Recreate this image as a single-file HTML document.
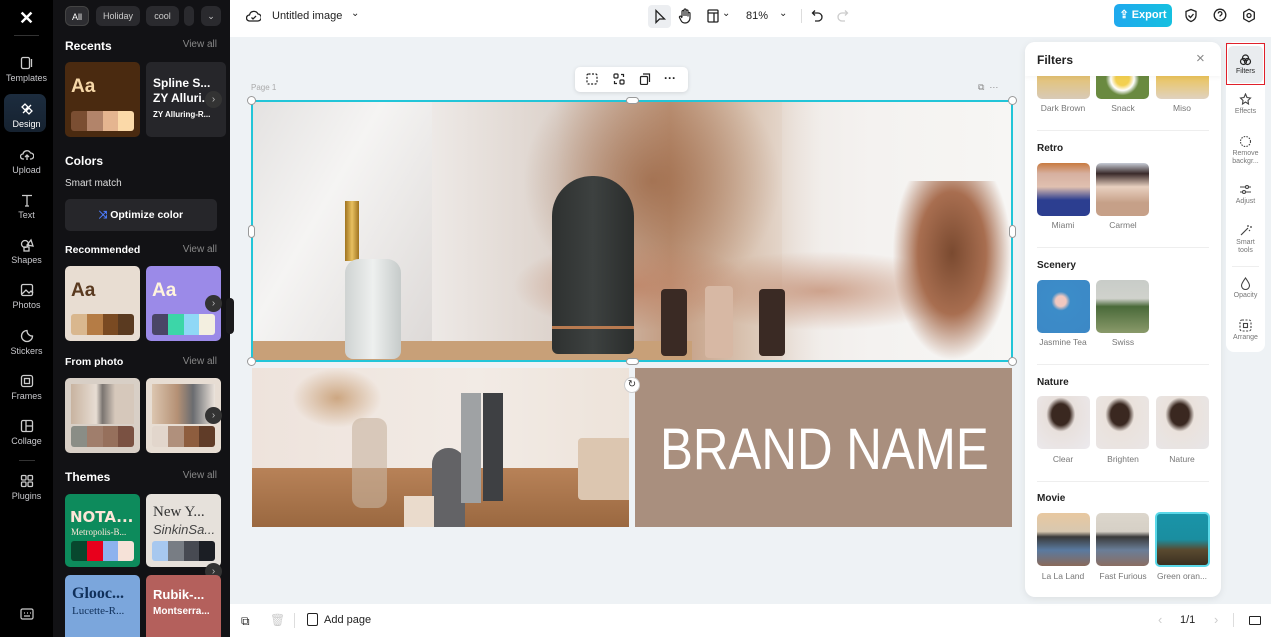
<!DOCTYPE html>
<html><head><meta charset="utf-8">
<style>
*{box-sizing:border-box;margin:0;padding:0}
body{width:1271px;height:637px;overflow:hidden;font-family:"Liberation Sans",sans-serif;background:#eef2f5;position:relative}
.abs{position:absolute}
.rail{left:0;top:0;width:53px;height:637px;background:#000}
.ri{position:absolute;left:0;width:53px;text-align:center;color:#c8c8cc;font-size:9px}
.ri svg{display:block;margin:0 auto 3px}
.panel{left:53px;top:0;width:177px;height:637px;background:#121215;color:#fff;overflow:hidden}
.chip{position:absolute;top:6px;height:20px;border-radius:6px;background:#2a2a2e;color:#ccc;font-size:9px;line-height:20px;text-align:center}
.h{position:absolute;left:12px;font-size:12px;font-weight:bold;color:#fff}
.va{position:absolute;right:13px;font-size:10px;color:#888}
.card{position:absolute;width:75px;height:75px;border-radius:5px;overflow:hidden}
.sw{position:absolute;left:6px;right:6px;bottom:6px;height:21px;border-radius:3px;overflow:hidden;display:flex}
.sw i{flex:1}
.arr{position:absolute;width:17px;height:17px;border-radius:50%;background:#333;color:#bbb;font-size:10px;line-height:17px;text-align:center}
.top{left:230px;top:0;width:1041px;height:37px;background:#fff}
.bot{left:230px;top:604px;width:1041px;height:33px;background:#fff}
.fp{left:1025px;top:42px;width:196px;height:555px;background:#fff;border-radius:10px;box-shadow:0 2px 8px rgba(0,0,0,.08);overflow:hidden}
.fh{position:absolute;left:12px;font-size:10px;font-weight:bold;color:#222}
.th{position:absolute;width:53px;height:53px;border-radius:5px;overflow:hidden}
.tl{position:absolute;width:60px;text-align:center;font-size:8.5px;color:#777}
.dv{position:absolute;left:12px;width:172px;height:1px;background:#eee}
.rr{left:1226px;top:42px;width:39px;height:310px;background:#fff;border-radius:8px}
.rb{position:absolute;left:0;width:39px;text-align:center;font-size:7px;color:#777;line-height:8px}
.rb svg{display:block;margin:0 auto 2px}
.hd{position:absolute;width:9px;height:9px;border-radius:50%;background:#fff;border:1px solid #999}
</style></head><body>

<!-- left rail -->
<div class="abs rail">
 <div class="ri" style="top:8px;color:#fff;font-size:18px;font-weight:bold">✕</div>
 <div style="position:absolute;left:14px;top:35px;width:25px;height:1px;background:#333"></div>
 <div class="ri" style="top:56px"><svg width="14" height="14" viewBox="0 0 14 14" fill="none" stroke="#ccc" stroke-width="1.3"><rect x="1.5" y="1.5" width="8" height="11" rx="1.5"/><path d="M11.5 3v8"/></svg>Templates</div>
 <div style="position:absolute;left:4px;top:94px;width:42px;height:38px;border-radius:7px;background:linear-gradient(#1c2c3e,#162230)"></div>
 <div class="ri" style="top:102px;color:#fff"><svg width="14" height="14" viewBox="0 0 14 14" fill="none" stroke="#fff" stroke-width="1.3"><path d="M2 5l3-3 3 3-3 3zM6 9l3-3 3 3-3 3zM3 11l8-8"/></svg>Design</div>
 <div class="ri" style="top:148px"><svg width="14" height="14" viewBox="0 0 14 14" fill="none" stroke="#ccc" stroke-width="1.3"><path d="M4 11H3a2.5 2.5 0 010-5 4 4 0 017.5-1A3 3 0 0111 11h-1M7 12V7M5 9l2-2 2 2"/></svg>Upload</div>
 <div class="ri" style="top:193px"><svg width="14" height="14" viewBox="0 0 14 14" fill="none" stroke="#ccc" stroke-width="1.3"><path d="M2 2.5h10M7 2.5V13M5 13h4"/></svg>Text</div>
 <div class="ri" style="top:238px"><svg width="14" height="14" viewBox="0 0 14 14" fill="none" stroke="#ccc" stroke-width="1.3"><circle cx="5" cy="6" r="3.5"/><path d="M7 7l4-5 2 6z"/><rect x="4" y="9" width="5" height="4"/></svg>Shapes</div>
 <div class="ri" style="top:283px"><svg width="14" height="14" viewBox="0 0 14 14" fill="none" stroke="#ccc" stroke-width="1.3"><rect x="1.5" y="1.5" width="11" height="11" rx="1.5"/><path d="M2 11l4-4 3 3 2-2 2 2"/></svg>Photos</div>
 <div class="ri" style="top:329px"><svg width="14" height="14" viewBox="0 0 14 14" fill="none" stroke="#ccc" stroke-width="1.3"><path d="M12.5 7A5.5 5.5 0 117 1.5c0 3 2 5.5 5.5 5.5z"/></svg>Stickers</div>
 <div class="ri" style="top:374px"><svg width="14" height="14" viewBox="0 0 14 14" fill="none" stroke="#ccc" stroke-width="1.3"><rect x="1.5" y="1.5" width="11" height="11" rx="2"/><rect x="4.5" y="4.5" width="5" height="5"/></svg>Frames</div>
 <div class="ri" style="top:419px"><svg width="14" height="14" viewBox="0 0 14 14" fill="none" stroke="#ccc" stroke-width="1.3"><rect x="1.5" y="1.5" width="11" height="11" rx="1.5"/><path d="M6 1.5v11M6 7h6.5"/></svg>Collage</div>
 <div style="position:absolute;left:19px;top:460px;width:16px;height:1px;background:#333"></div>
 <div class="ri" style="top:474px"><svg width="14" height="14" viewBox="0 0 14 14" fill="none" stroke="#ccc" stroke-width="1.3"><rect x="1.5" y="1.5" width="4.5" height="4.5" rx="1"/><rect x="8" y="1.5" width="4.5" height="4.5" rx="1"/><rect x="1.5" y="8" width="4.5" height="4.5" rx="1"/><rect x="8" y="8" width="4.5" height="4.5" rx="1"/></svg>Plugins</div>
 <div class="ri" style="top:608px"><svg width="14" height="12" viewBox="0 0 14 12" fill="none" stroke="#ccc" stroke-width="1.2"><rect x="1" y="1" width="12" height="10" rx="1.5"/><path d="M4 8h6M4 5h1M7 5h1M10 5h1"/></svg></div>
</div>

<!-- design panel -->
<div class="abs panel">
 <div class="chip" style="left:12px;width:24px;background:#2d2d31;border:1px solid #444;color:#fff">All</div>
 <div class="chip" style="left:43px;width:44px">Holiday</div>
 <div class="chip" style="left:93px;width:33px">cool</div>
 <div class="chip" style="left:131px;width:10px"></div>
 <div class="chip" style="left:148px;width:20px">⌄</div>
 <div class="h" style="top:39px">Recents</div><div class="va" style="top:39px">View all</div>
 <div class="card" style="left:12px;top:62px;background:#4a2a10"><div style="position:absolute;left:6px;top:14px;font-size:19px;font-weight:bold;color:#f6d7a8">Aa</div><div class="sw" style="height:20px"><i style="background:#7a4e32"></i><i style="background:#b2846a"></i><i style="background:#e5b590"></i><i style="background:#fbd9a8"></i></div></div>
 <div class="card" style="left:93px;top:62px;width:80px;background:#26262a"><div style="position:absolute;left:7px;top:14px;font-size:12px;font-weight:bold;line-height:15px;white-space:nowrap">Spline S...<br>ZY Alluri..</div><div style="position:absolute;left:7px;top:48px;font-size:8px;font-weight:bold;white-space:nowrap">ZY Alluring-R...</div></div>
 <div class="arr" style="left:152px;top:91px">›</div>
 <div class="h" style="top:154px">Colors</div>
 <div style="position:absolute;left:12px;top:178px;font-size:10px;color:#ddd">Smart match</div>
 <div style="position:absolute;left:12px;top:199px;width:152px;height:32px;border-radius:5px;background:#26262a;font-size:10.5px;font-weight:bold;line-height:32px;text-align:center"><span style="color:#4d7cff">⤨</span> Optimize color</div>
 <div class="h" style="top:244px;font-size:10.5px">Recommended</div><div class="va" style="top:244px">View all</div>
 <div class="card" style="left:12px;top:266px;background:#e8ddd2"><div style="position:absolute;left:6px;top:14px;font-size:19px;font-weight:bold;color:#5a3a20">Aa</div><div class="sw"><i style="background:#d9b78e"></i><i style="background:#b57c45"></i><i style="background:#7a4a22"></i><i style="background:#5a3a20"></i></div></div>
 <div class="card" style="left:93px;top:266px;background:#9b8ae8"><div style="position:absolute;left:6px;top:14px;font-size:19px;font-weight:bold;color:#fff4dd">Aa</div><div class="sw"><i style="background:#4a4566"></i><i style="background:#3cd6a8"></i><i style="background:#8fd8f6"></i><i style="background:#f3efe0"></i></div></div>
 <div class="arr" style="left:152px;top:295px">›</div>
 <div class="h" style="top:356px;font-size:10.5px">From photo</div><div class="va" style="top:356px">View all</div>
 <div class="card" style="left:12px;top:378px;background:#d8cfc6"><div style="position:absolute;left:6px;top:6px;right:6px;height:40px;background:linear-gradient(90deg,#c8b3a0,#e7ddd3 40%,#7a7470 50%,#d6c8bb 70%)"></div><div class="sw"><i style="background:#8a8d86"></i><i style="background:#a07e6c"></i><i style="background:#96705c"></i><i style="background:#7a5142"></i></div></div>
 <div class="card" style="left:93px;top:378px;background:#e7ddd3"><div style="position:absolute;left:6px;top:6px;right:6px;height:40px;background:linear-gradient(90deg,#dcc6b0,#b59175 40%,#6a6c70 65%,#ece4dc)"></div><div class="sw"><i style="background:#e2d6cc"></i><i style="background:#b0907c"></i><i style="background:#8e5d3e"></i><i style="background:#603c28"></i></div></div>
 <div class="arr" style="left:152px;top:407px">›</div>
 <div class="h" style="top:470px">Themes</div><div class="va" style="top:470px">View all</div>
 <div class="card" style="left:12px;top:494px;height:73px;background:#0d8b5c"><div style="position:absolute;left:5px;top:14px;font-size:15px;font-weight:900;color:#fde6d8;font-family:'DejaVu Sans';white-space:nowrap">NOTA...</div><div style="position:absolute;left:6px;top:33px;font-size:9px;color:#fde6d8;font-family:'Liberation Serif';white-space:nowrap">Metropolis-B...</div><div class="sw" style="height:20px"><i style="background:#08472e"></i><i style="background:#e8001c"></i><i style="background:#8db2ee"></i><i style="background:#f6e2d8"></i></div></div>
 <div class="card" style="left:93px;top:494px;height:73px;background:#e6e1db"><div style="position:absolute;left:7px;top:10px;font-size:15px;color:#333;font-family:'Liberation Serif';white-space:nowrap">New Y...</div><div style="position:absolute;left:7px;top:28px;font-size:13px;font-style:italic;color:#444;white-space:nowrap">SinkinSa...</div><div class="sw" style="height:20px"><i style="background:#a7c8ef"></i><i style="background:#787d84"></i><i style="background:#474a52"></i><i style="background:#1b1e24"></i></div></div>
 <div class="arr" style="left:152px;top:563px">›</div>
 <div class="card" style="left:12px;top:575px;background:#7ba6dc"><div style="position:absolute;left:7px;top:10px;font-size:16px;font-weight:bold;color:#10305a;font-family:'Liberation Serif';white-space:nowrap">Glooc...</div><div style="position:absolute;left:7px;top:30px;font-size:11px;color:#10305a;font-family:'Liberation Serif';white-space:nowrap">Lucette-R...</div><div class="sw" style="bottom:-10px"><i style="background:#c8d6a8"></i><i style="background:#3d7ccf"></i><i style="background:#4a5a2a"></i><i style="background:#0c2a48"></i></div></div>
 <div class="card" style="left:93px;top:575px;background:#b4605c"><div style="position:absolute;left:7px;top:12px;font-size:13px;font-weight:bold;color:#fff;white-space:nowrap">Rubik-...</div><div style="position:absolute;left:7px;top:31px;font-size:10px;font-weight:bold;color:#fff;white-space:nowrap">Montserra...</div><div class="sw" style="bottom:-10px"><i style="background:#a83030"></i><i style="background:#d8b0ac"></i><i style="background:#e6d8d6"></i><i style="background:#fff"></i></div></div>
</div>
<div class="abs" style="left:226px;top:298px;width:8px;height:36px;background:#1a1a1c;border-radius:4px"></div>

<!-- top bar -->
<div class="abs top">
 <svg class="abs" style="left:16px;top:9px" width="15" height="14" viewBox="0 0 15 14" fill="none" stroke="#222" stroke-width="1.3"><path d="M4 12H3.5a3 3 0 010-6 4.5 4.5 0 018.5-1 3.5 3.5 0 01-.5 7z"/><path d="M5.5 8.5l1.5 1.5 3-3"/></svg>
 <div class="abs" style="left:42px;top:10px;font-size:11px;color:#222">Untitled image</div>
 <div class="abs" style="left:121px;top:8px;font-size:10px;color:#222">⌄</div>
 <div class="abs" style="left:418px;top:5px;width:23px;height:23px;border-radius:4px;background:#eceef1"></div>
 <svg class="abs" style="left:423px;top:9px" width="14" height="15" viewBox="0 0 14 15" fill="none" stroke="#222" stroke-width="1.3"><path d="M3 1.5v12l3.5-3.5h5z"/></svg>
 <svg class="abs" style="left:448px;top:8px" width="14" height="16" viewBox="0 0 14 16" fill="none" stroke="#222" stroke-width="1.2"><path d="M4 9V3.5a1 1 0 012 0V8M6 7V2a1 1 0 012 0v6M8 7.5V3a1 1 0 012 0v5.5M10 8V5.5a1 1 0 012 0V10a5 5 0 01-5 5 4.5 4.5 0 01-4-2.5L1.5 9.5a1 1 0 011.7-1L4 10"/></svg>
 <svg class="abs" style="left:477px;top:9px" width="12" height="14" viewBox="0 0 12 14" fill="none" stroke="#222" stroke-width="1.3"><rect x="1" y="1" width="10" height="12" rx="1"/><path d="M1 4h10M7 4v9"/></svg>
 <div class="abs" style="left:492px;top:8px;font-size:10px;color:#222">⌄</div>
 <div class="abs" style="left:516px;top:10px;font-size:11px;color:#222">81%</div>
 <div class="abs" style="left:549px;top:8px;font-size:10px;color:#222">⌄</div>
 <div class="abs" style="left:571px;top:9px;width:1px;height:14px;background:#ddd"></div>
 <svg class="abs" style="left:581px;top:9px" width="12" height="13" viewBox="0 0 12 13" fill="none" stroke="#222" stroke-width="1.3"><path d="M4 1.5L1.5 4 4 6.5M1.5 4H7a4 4 0 010 8H4"/></svg>
 <svg class="abs" style="left:607px;top:9px" width="12" height="13" viewBox="0 0 12 13" fill="none" stroke="#ccc" stroke-width="1.3"><path d="M8 1.5L10.5 4 8 6.5M10.5 4H5a4 4 0 000 8h3"/></svg>
 <div class="abs" style="left:884px;top:4px;width:58px;height:23px;border-radius:5px;background:linear-gradient(90deg,#1fa9ee,#15c0e0);color:#fff;font-size:11px;font-weight:bold;line-height:23px;text-align:center">⇪ Export</div>
 <svg class="abs" style="left:954px;top:8px" width="14" height="15" viewBox="0 0 14 15" fill="none" stroke="#222" stroke-width="1.3"><path d="M7 1.5l5 2v4c0 3-2.5 5-5 6-2.5-1-5-3-5-6v-4z"/><path d="M4.5 7.5l2 2 3-3.5"/></svg>
 <svg class="abs" style="left:983px;top:8px" width="14" height="14" viewBox="0 0 14 14" fill="none" stroke="#222" stroke-width="1.3"><circle cx="7" cy="7" r="5.8"/><path d="M5.3 5.5a1.8 1.8 0 113 1.3c-.8.5-1.3.8-1.3 1.7M7 10.3v.2"/></svg>
 <svg class="abs" style="left:1012px;top:8px" width="14" height="15" viewBox="0 0 14 15" fill="none" stroke="#222" stroke-width="1.3"><path d="M7 1.2l5.3 3v6.6L7 13.8 1.7 10.8V4.2z"/><circle cx="7" cy="7.5" r="2"/></svg>
</div>

<!-- canvas -->
<div class="abs" style="left:251px;top:83px;font-size:8px;color:#aaa">Page 1</div>
<div class="abs" style="left:978px;top:82px;font-size:9px;color:#888">⧉ &nbsp;···</div>
<div class="abs" style="left:575px;top:67px;width:113px;height:25px;background:#fff;border-radius:5px;box-shadow:0 1px 4px rgba(0,0,0,.12)">
 <svg class="abs" style="left:11px;top:6px" width="12" height="12" viewBox="0 0 12 12" fill="none" stroke="#222" stroke-width="1.2" stroke-dasharray="2 1.5"><rect x="1" y="1" width="10" height="10" rx="1.5"/></svg>
 <svg class="abs" style="left:38px;top:6px" width="12" height="12" viewBox="0 0 12 12" fill="none" stroke="#222" stroke-width="1.2"><rect x="1" y="1" width="4" height="4" rx="1"/><rect x="7" y="7" width="4" height="4" rx="1"/><path d="M8 1.5h2.5V4M4 10.5H1.5V8"/></svg>
 <svg class="abs" style="left:64px;top:6px" width="12" height="12" viewBox="0 0 12 12" fill="none" stroke="#222" stroke-width="1.2"><rect x="1.5" y="3.5" width="7" height="8" rx="1"/><path d="M4 1h6.5v8"/></svg>
 <div class="abs" style="left:89px;top:4px;font-size:12px;font-weight:bold;color:#222">···</div>
</div>

<!-- top photo -->
<div class="abs" style="left:252px;top:101px;width:760px;height:260px;overflow:hidden;background:linear-gradient(90deg,#e9e5e2 0%,#f1eeec 20%,#ddd3cc 40%,#c29b80 55%,#d9c3b1 65%,#efe9e5 75%,#f6f3f1 100%)">
 <div class="abs" style="left:0;top:0;width:180px;height:260px;background:linear-gradient(120deg,#e4e2e1,#f5f4f3 40%,#dcd8d6)"></div>
 <div class="abs" style="left:270px;top:0;width:260px;height:200px;background:radial-gradient(ellipse at 50% 40%,rgba(150,95,60,.7),rgba(200,160,130,0) 70%)"></div>
 <div class="abs" style="left:530px;top:0;width:230px;height:260px;background:linear-gradient(90deg,rgba(240,238,236,.2),#f4f2f0 40%,#f7f6f4)"></div>
 <div class="abs" style="left:260px;top:140px;width:240px;height:90px;background:radial-gradient(ellipse,rgba(190,130,100,.8),rgba(220,180,160,0) 70%)"></div>
 <div class="abs" style="left:420px;top:150px;width:300px;height:80px;background:radial-gradient(ellipse,rgba(190,130,100,.7),rgba(220,180,160,0) 70%)"></div>
 <div class="abs" style="left:640px;top:80px;width:120px;height:180px;background:radial-gradient(ellipse at 50% 40%,#7a4a30,#a86e50 40%,rgba(220,190,170,0) 70%)"></div>
 <div class="abs" style="left:0;top:240px;width:440px;height:20px;background:#c8a078"></div>
 <div class="abs" style="left:93px;top:100px;width:14px;height:60px;background:linear-gradient(90deg,#a07420,#e8c060,#a07420)"></div>
 <div class="abs" style="left:93px;top:158px;width:56px;height:100px;border-radius:14px 14px 8px 8px;background:linear-gradient(90deg,#cfd3d2,#eef0ef,#c6cbca)"></div>
 <div class="abs" style="left:300px;top:75px;width:82px;height:178px;border-radius:40px 40px 6px 6px;background:linear-gradient(90deg,#2e3130,#3d4140 50%,#2a2d2c)"></div>
 <div class="abs" style="left:300px;top:225px;width:82px;height:3px;background:#b87a50"></div>
 <div class="abs" style="left:409px;top:188px;width:26px;height:67px;border-radius:4px;background:#3a2a24"></div>
 <div class="abs" style="left:453px;top:185px;width:28px;height:72px;border-radius:4px;background:#d7b8a4"></div>
 <div class="abs" style="left:507px;top:188px;width:26px;height:67px;border-radius:4px;background:#3a2a24"></div>
</div>
<div class="abs" style="left:251px;top:100px;width:762px;height:262px;border:2px solid #22c5d8"></div>
<div class="hd" style="left:247px;top:96px"></div><div class="hd" style="left:1008px;top:96px"></div>
<div class="hd" style="left:247px;top:357px"></div><div class="hd" style="left:1008px;top:357px"></div>
<div class="abs" style="left:626px;top:97px;width:13px;height:7px;border-radius:4px;background:#fff;border:1px solid #999"></div>
<div class="abs" style="left:626px;top:358px;width:13px;height:7px;border-radius:4px;background:#fff;border:1px solid #999"></div>
<div class="abs" style="left:248px;top:225px;width:7px;height:13px;border-radius:4px;background:#fff;border:1px solid #999"></div>
<div class="abs" style="left:1009px;top:225px;width:7px;height:13px;border-radius:4px;background:#fff;border:1px solid #999"></div>

<!-- bottom left photo -->
<div class="abs" style="left:252px;top:368px;width:377px;height:159px;overflow:hidden;background:linear-gradient(90deg,#eee3dc,#f2ebe5 60%,#ede3da)">
 <div class="abs" style="left:0;top:100px;width:377px;height:59px;background:linear-gradient(#b88258,#9a6840)"></div>
 <div class="abs" style="left:40px;top:0;width:90px;height:60px;background:radial-gradient(ellipse,rgba(190,140,90,.7),rgba(230,200,170,0) 70%)"></div>
 <div class="abs" style="left:100px;top:50px;width:35px;height:90px;border-radius:10px;background:rgba(200,180,160,.6)"></div>
 <div class="abs" style="left:180px;top:80px;width:33px;height:112px;border-radius:16px 16px 3px 3px;background:#636366"></div>
 <div class="abs" style="left:209px;top:25px;width:20px;height:110px;background:#9fa2a4"></div>
 <div class="abs" style="left:231px;top:25px;width:20px;height:108px;background:#3e4043"></div>
 <div class="abs" style="left:326px;top:70px;width:55px;height:62px;border-radius:4px;background:#dcc6b0"></div>
 <div class="abs" style="left:152px;top:128px;width:30px;height:31px;background:#eadbcc"></div>
</div>
<!-- brand -->
<div class="abs" style="left:635px;top:368px;width:377px;height:159px;background:#a98f7e"></div>
<div class="abs" style="left:660px;top:421px;font-family:'Liberation Sans Narrow','Liberation Sans',sans-serif;font-size:58px;line-height:58px;color:#fff;white-space:nowrap;transform:scaleX(.85);transform-origin:left">BRAND NAME</div>
<div class="abs" style="left:624px;top:377px;width:16px;height:16px;border-radius:50%;background:#fff;border:1px solid #ccc;font-size:10px;text-align:center;line-height:14px;color:#333">↻</div>

<!-- bottom bar -->
<div class="abs bot">
 <div class="abs" style="left:11px;top:10px;font-size:12px;color:#222">⧉</div>
 <div class="abs" style="left:40px;top:9px;font-size:12px;color:#ccc">🗑︎</div>
 <div class="abs" style="left:64px;top:9px;width:1px;height:15px;background:#ddd"></div>
 <div class="abs" style="left:77px;top:9px;width:11px;height:13px;border:1.3px solid #222;border-radius:2px"></div>
 <div class="abs" style="left:94px;top:10px;font-size:11px;color:#222">Add page</div>
 <div class="abs" style="left:928px;top:8px;font-size:13px;color:#ccc">‹</div>
 <div class="abs" style="left:950px;top:10px;font-size:11px;color:#222">1/1</div>
 <div class="abs" style="left:984px;top:8px;font-size:13px;color:#ccc">›</div>
 <div class="abs" style="left:1003px;top:9px;width:1px;height:14px;background:#ddd"></div>
 <div class="abs" style="left:1019px;top:12px;width:12px;height:9px;border:1.4px solid #222;border-radius:1px"></div>
</div>

<!-- filters panel -->
<div class="abs fp">
 <div class="th" style="left:12px;top:28px;height:29px;background:linear-gradient(#e8c060,#d8cab8)"></div>
 <div class="th" style="left:71px;top:28px;height:29px;background:radial-gradient(circle at 50% 30%,#f3d050 20%,#fff 35%,#6a8a40 50%)"></div>
 <div class="th" style="left:131px;top:28px;height:29px;background:linear-gradient(#eec040,#e0d2c0)"></div>
 <div class="abs" style="left:0;top:0;width:196px;height:34px;background:#fff;box-shadow:0 2px 4px rgba(0,0,0,.04)"></div>
 <div class="abs" style="left:12px;top:11px;font-size:12px;font-weight:bold;color:#222">Filters</div>
 <div class="abs" style="left:171px;top:8px;font-size:15px;color:#888">×</div>
 <div class="tl" style="left:8px;top:61px">Dark Brown</div><div class="tl" style="left:68px;top:61px">Snack</div><div class="tl" style="left:127px;top:61px">Miso</div>
 <div class="dv" style="top:88px"></div>
 <div class="fh" style="top:101px">Retro</div>
 <div class="th" style="left:12px;top:121px;background:linear-gradient(#c87a40 0%,#d6b0a0 20%,#e0c0b0 45%,#2c3e90 70%)"></div>
 <div class="th" style="left:71px;top:121px;background:linear-gradient(#c7ccd6 0%,#3a2a2a 20%,#e8d0c0 45%,#c6a088 75%)"></div>
 <div class="tl" style="left:8px;top:178px">Miami</div><div class="tl" style="left:68px;top:178px">Carmel</div>
 <div class="dv" style="top:205px"></div>
 <div class="fh" style="top:218px">Scenery</div>
 <div class="th" style="left:12px;top:238px;background:radial-gradient(circle at 45% 40%,#f0c8c0 12%,#3c8cc8 22%,#3c88c6)"></div>
 <div class="th" style="left:71px;top:238px;background:linear-gradient(#c8ccc8 0%,#d0d2cc 35%,#4a6a3a 50%,#8a9a6a 100%)"></div>
 <div class="tl" style="left:8px;top:295px">Jasmine Tea</div><div class="tl" style="left:68px;top:295px">Swiss</div>
 <div class="dv" style="top:322px"></div>
 <div class="fh" style="top:335px">Nature</div>
 <div class="th" style="left:12px;top:354px;background:radial-gradient(ellipse at 45% 35%,#3a2820 22%,#e8e0dc 35%,#eceaee)"></div>
 <div class="th" style="left:71px;top:354px;background:radial-gradient(ellipse at 45% 35%,#3a2820 22%,#eae2dc 35%,#eae6e6)"></div>
 <div class="th" style="left:131px;top:354px;background:radial-gradient(ellipse at 45% 35%,#3a2820 22%,#eae2dc 35%,#e8e6e8)"></div>
 <div class="tl" style="left:8px;top:412px">Clear</div><div class="tl" style="left:68px;top:412px">Brighten</div><div class="tl" style="left:127px;top:412px">Nature</div>
 <div class="dv" style="top:439px"></div>
 <div class="fh" style="top:451px">Movie</div>
 <div class="th" style="left:12px;top:471px;background:linear-gradient(#e8c8a0 0%,#d8c8b0 35%,#3a3a3a 45%,#5a7aa0 70%,#8a6a5a 100%)"></div>
 <div class="th" style="left:71px;top:471px;background:linear-gradient(#dcd6cc 0%,#d6d0c6 35%,#3a3a3a 45%,#6a7e98 70%,#8a6e62 100%)"></div>
 <div class="th" style="left:130px;top:470px;width:55px;height:55px;border:2px solid #5ad8e8;background:linear-gradient(#1a94a8 0%,#1a8ea0 50%,#5a4a30 70%,#3a3020)"></div>
 <div class="tl" style="left:8px;top:529px">La La Land</div><div class="tl" style="left:68px;top:529px">Fast Furious</div><div class="tl" style="left:127px;top:529px">Green oran...</div>
</div>

<!-- right rail -->
<div class="abs rr">
 <div class="abs" style="left:2px;top:4px;width:35px;height:37px;border-radius:5px;background:#e9ecef"></div>
 <div class="rb" style="top:12px;color:#222"><svg width="13" height="12" viewBox="0 0 13 12" fill="none" stroke="#222" stroke-width="1.2"><circle cx="6.5" cy="4" r="3"/><circle cx="4.5" cy="7.5" r="3"/><circle cx="8.5" cy="7.5" r="3"/></svg>Filters</div>
 <div class="rb" style="top:51px"><svg width="13" height="13" viewBox="0 0 13 13" fill="none" stroke="#444" stroke-width="1.1"><path d="M6.5 1l1.5 3.5 3.5.5-2.5 2.5.5 3.5-3-2-3 2 .5-3.5L1.5 5 5 4.5z"/></svg>Effects</div>
 <div class="rb" style="top:93px"><svg width="13" height="13" viewBox="0 0 13 13" fill="none" stroke="#444" stroke-width="1.1" stroke-dasharray="1.5 1.2"><circle cx="6.5" cy="6.5" r="5"/></svg>Remove<br>backgr...</div>
 <div class="rb" style="top:141px"><svg width="13" height="13" viewBox="0 0 13 13" fill="none" stroke="#444" stroke-width="1.1"><path d="M1 4h11M1 9h11"/><circle cx="8" cy="4" r="1.5" fill="#fff"/><circle cx="5" cy="9" r="1.5" fill="#fff"/></svg>Adjust</div>
 <div class="rb" style="top:182px"><svg width="13" height="13" viewBox="0 0 13 13" fill="none" stroke="#444" stroke-width="1.2"><path d="M2 11l7-7M9 1v2M11 3h2M10 6l1 1"/></svg>Smart<br>tools</div>
 <div class="abs" style="left:6px;top:224px;width:27px;height:1px;background:#eee"></div>
 <div class="rb" style="top:235px"><svg width="11" height="13" viewBox="0 0 11 13" fill="none" stroke="#444" stroke-width="1.1"><path d="M5.5 1C3 4.5 1.5 6.5 1.5 8.5a4 4 0 008 0C9.5 6.5 8 4.5 5.5 1z"/></svg>Opacity</div>
 <div class="rb" style="top:277px"><svg width="13" height="13" viewBox="0 0 13 13" fill="none" stroke="#444" stroke-width="1.1"><rect x="1" y="1" width="11" height="11" rx="2" stroke-dasharray="2 1.5"/><rect x="4.5" y="4.5" width="4" height="4"/></svg>Arrange</div>
</div>
<div class="abs" style="left:1226px;top:43px;width:39px;height:42px;border:1.5px solid #e0202a"></div>
</body></html>
